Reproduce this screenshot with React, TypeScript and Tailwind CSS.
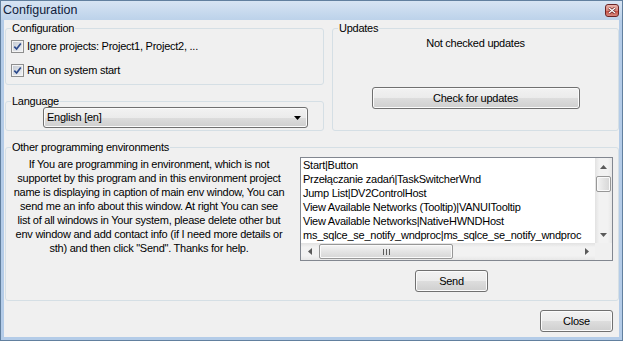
import type { ReactNode } from "react";

// face of a Win7 push button / combo box
const btnFace =
  "rounded-[3px] border border-[#707070] bg-[linear-gradient(#f2f2f2_0%,#ebebeb_50%,#dddddd_51%,#cfcfcf_100%)] shadow-[inset_0_0_0_1px_#fbfbfb]";

const windows = [
  "Start|Button",
  "Przełączanie zadań|TaskSwitcherWnd",
  "Jump List|DV2ControlHost",
  "View Available Networks (Tooltip)|VANUITooltip",
  "View Available Networks|NativeHWNDHost",
  "ms_sqlce_se_notify_wndproc|ms_sqlce_se_notify_wndproc",
];

function GroupBox({
  title,
  className = "",
  children,
}: {
  title: string;
  className?: string;
  children?: ReactNode;
}) {
  return (
    <fieldset className={`rounded-[3px] border border-[#d5dfe5] ${className}`}>
      <legend className="ml-[5px] px-px leading-[12px]">{title}</legend>
      {children}
    </fieldset>
  );
}

function CheckBox({ label }: { label: string }) {
  return (
    <label className="flex h-4 items-center gap-[3px]">
      <span className="h-[13px] w-[13px] border border-[#8e8f8f] bg-[#f4f4f4] p-px">
        <span className="flex h-full w-full items-center justify-center bg-[linear-gradient(135deg,#c6ccd4,#eef0f3)]">
          <svg viewBox="0 0 9 9" className="h-[9px] w-[9px] overflow-visible">
            <path d="M1.3 4.6 L3.6 7 L7.8 1.4" stroke="#2c4a8c" strokeWidth="1.7" fill="none" />
          </svg>
        </span>
      </span>
      <span>{label}</span>
    </label>
  );
}

function Arrow({ dir, color = "#5a5a5a" }: { dir: "up" | "down" | "left" | "right"; color?: string }) {
  const d = {
    up: "M0 4 L3.5 0 L7 4 Z",
    down: "M0 0 L7 0 L3.5 4 Z",
    left: "M4 0 L4 7 L0 3.5 Z",
    right: "M0 0 L4 3.5 L0 7 Z",
  }[dir];
  const vert = dir === "up" || dir === "down";
  return (
    <svg
      width={vert ? 7 : 4}
      height={vert ? 4 : 7}
      viewBox={vert ? "0 0 7 4" : "0 0 4 7"}
    >
      <path d={d} fill={color} />
    </svg>
  );
}

function ListBox() {
  return (
    <div className="grid h-[104px] w-[313px] grid-cols-[294px_17px] grid-rows-[85px_17px] border border-[#828790] bg-white">
      <div className="overflow-hidden whitespace-nowrap pl-[2px] leading-[14px]">
        {windows.map((w) => (
          <div key={w}>{w}</div>
        ))}
      </div>

      {/* vertical scrollbar */}
      <div className="flex flex-col bg-[linear-gradient(90deg,#e2e2e2,#f2f2f2_25%,#f2f2f2_75%,#e7e7e7)]">
        <div className="flex h-[17px] items-center justify-center">
          <Arrow dir="up" />
        </div>
        <div className="flex-1 px-px">
          <div className="mt-px h-[16px] rounded-[2px] border border-[#979797] bg-[linear-gradient(90deg,#f4f4f4,#e4e4e4_50%,#d6d6d6)] shadow-[inset_0_0_0_1px_#fafafa]" />
        </div>
        <div className="flex h-[17px] items-center justify-center">
          <Arrow dir="down" />
        </div>
      </div>

      {/* horizontal scrollbar */}
      <div className="flex bg-[linear-gradient(#e2e2e2,#f2f2f2_25%,#f2f2f2_75%,#e7e7e7)]">
        <div className="flex w-[17px] items-center justify-center">
          <Arrow dir="left" />
        </div>
        <div className="flex-1 py-px">
          <div className="ml-px flex h-full w-[134px] items-center justify-center gap-[2px] rounded-[2px] border border-[#979797] bg-[linear-gradient(#f4f4f4,#e4e4e4_50%,#d6d6d6)] shadow-[inset_0_0_0_1px_#fafafa]">
            <span className="h-[6px] w-px bg-[#5c5c5c]" />
            <span className="h-[6px] w-px bg-[#5c5c5c]" />
            <span className="h-[6px] w-px bg-[#5c5c5c]" />
          </div>
        </div>
        <div className="flex w-[17px] items-center justify-center">
          <Arrow dir="right" />
        </div>
      </div>

      <div className="bg-[#f0f0f0]" />
    </div>
  );
}

export default function App() {
  return (
    <div className="flex h-[341px] w-[623px] select-none flex-col border border-[#62809f] bg-[#b4cce8] font-['Liberation_Sans',Arial,sans-serif] text-[11px] tracking-[-0.25px] text-black">
      {/* title bar */}
      <div className="flex h-[19px] items-center justify-between bg-[linear-gradient(#d7e4f3,#bcd2ea)] pl-[2px] pr-[3px]">
        <span className="text-[12.5px] tracking-normal text-[#10203a]">Configuration</span>
        <div className="flex h-[13px] w-[14px] items-center justify-center rounded-[3px] border border-[#6b2424] bg-[linear-gradient(#eab4ac,#d98479_50%,#c4493d_51%,#d9897f)]">
          <svg width="8" height="7" viewBox="0 0 8 7">
            <path d="M1 1 L7 6 M7 1 L1 6" stroke="#5a1a1a" strokeWidth="2.6" />
            <path d="M1 1 L7 6 M7 1 L1 6" stroke="#ffffff" strokeWidth="1.4" />
          </svg>
        </div>
      </div>

      {/* client area */}
      <div className="mx-[3px] flex h-[317px] flex-col bg-[#f0f0f0] pl-px pt-[2px]">
        <div className="flex h-[109px] gap-[8px]">
          <div className="flex w-[319px] flex-col gap-[10px]">
            <GroupBox title="Configuration" className="h-[63px]">
              <div className="flex flex-col gap-[8px] pl-[5px] pt-[4px]">
                <CheckBox label="Ignore projects: Project1, Project2, ..." />
                <CheckBox label="Run on system start" />
              </div>
            </GroupBox>
            <GroupBox title="Language" className="h-[36px]">
              <div
                className={`ml-[37px] flex h-[21px] w-[265px] items-center pl-[3px] pr-[6px] ${btnFace}`}
              >
                <span className="flex-1">English [en]</span>
                <Arrow dir="down" color="#000000" />
              </div>
            </GroupBox>
          </div>

          <GroupBox title="Updates" className="h-[109px] w-[287px]">
            <div className="flex flex-col items-center">
              <p className="mt-[3px] leading-[12px]">Not checked updates</p>
              <button className={`mt-[38px] h-[22px] w-[208px] ${btnFace}`}>
                Check for updates
              </button>
            </div>
          </GroupBox>
        </div>

        <GroupBox title="Other programming environments" className="mt-[10px] h-[160px] w-[614px]">
          <div className="mt-[4px] flex">
            <p className="w-[286px] whitespace-nowrap text-center leading-[14px]">
              If You are programming in environment, which is not
              <br />
              supportet by this program and in this environment project
              <br />
              name is displaying in caption of main env window, You can
              <br />
              send me an info about this window. At right You can see
              <br />
              list of all windows in Your system, please delete other but
              <br />
              env window and add contact info (if I need more details or
              <br />
              sth) and then click "Send". Thanks for help.
            </p>
            <div className="ml-[8px] flex flex-col">
              <ListBox />
              <button className={`ml-[115px] mt-[9px] h-[22px] w-[73px] ${btnFace}`}>Send</button>
            </div>
          </div>
        </GroupBox>

        <div className="mt-[9px] flex justify-end pr-[6px]">
          <button className={`h-[22px] w-[73px] ${btnFace}`}>Close</button>
        </div>
      </div>
    </div>
  );
}
